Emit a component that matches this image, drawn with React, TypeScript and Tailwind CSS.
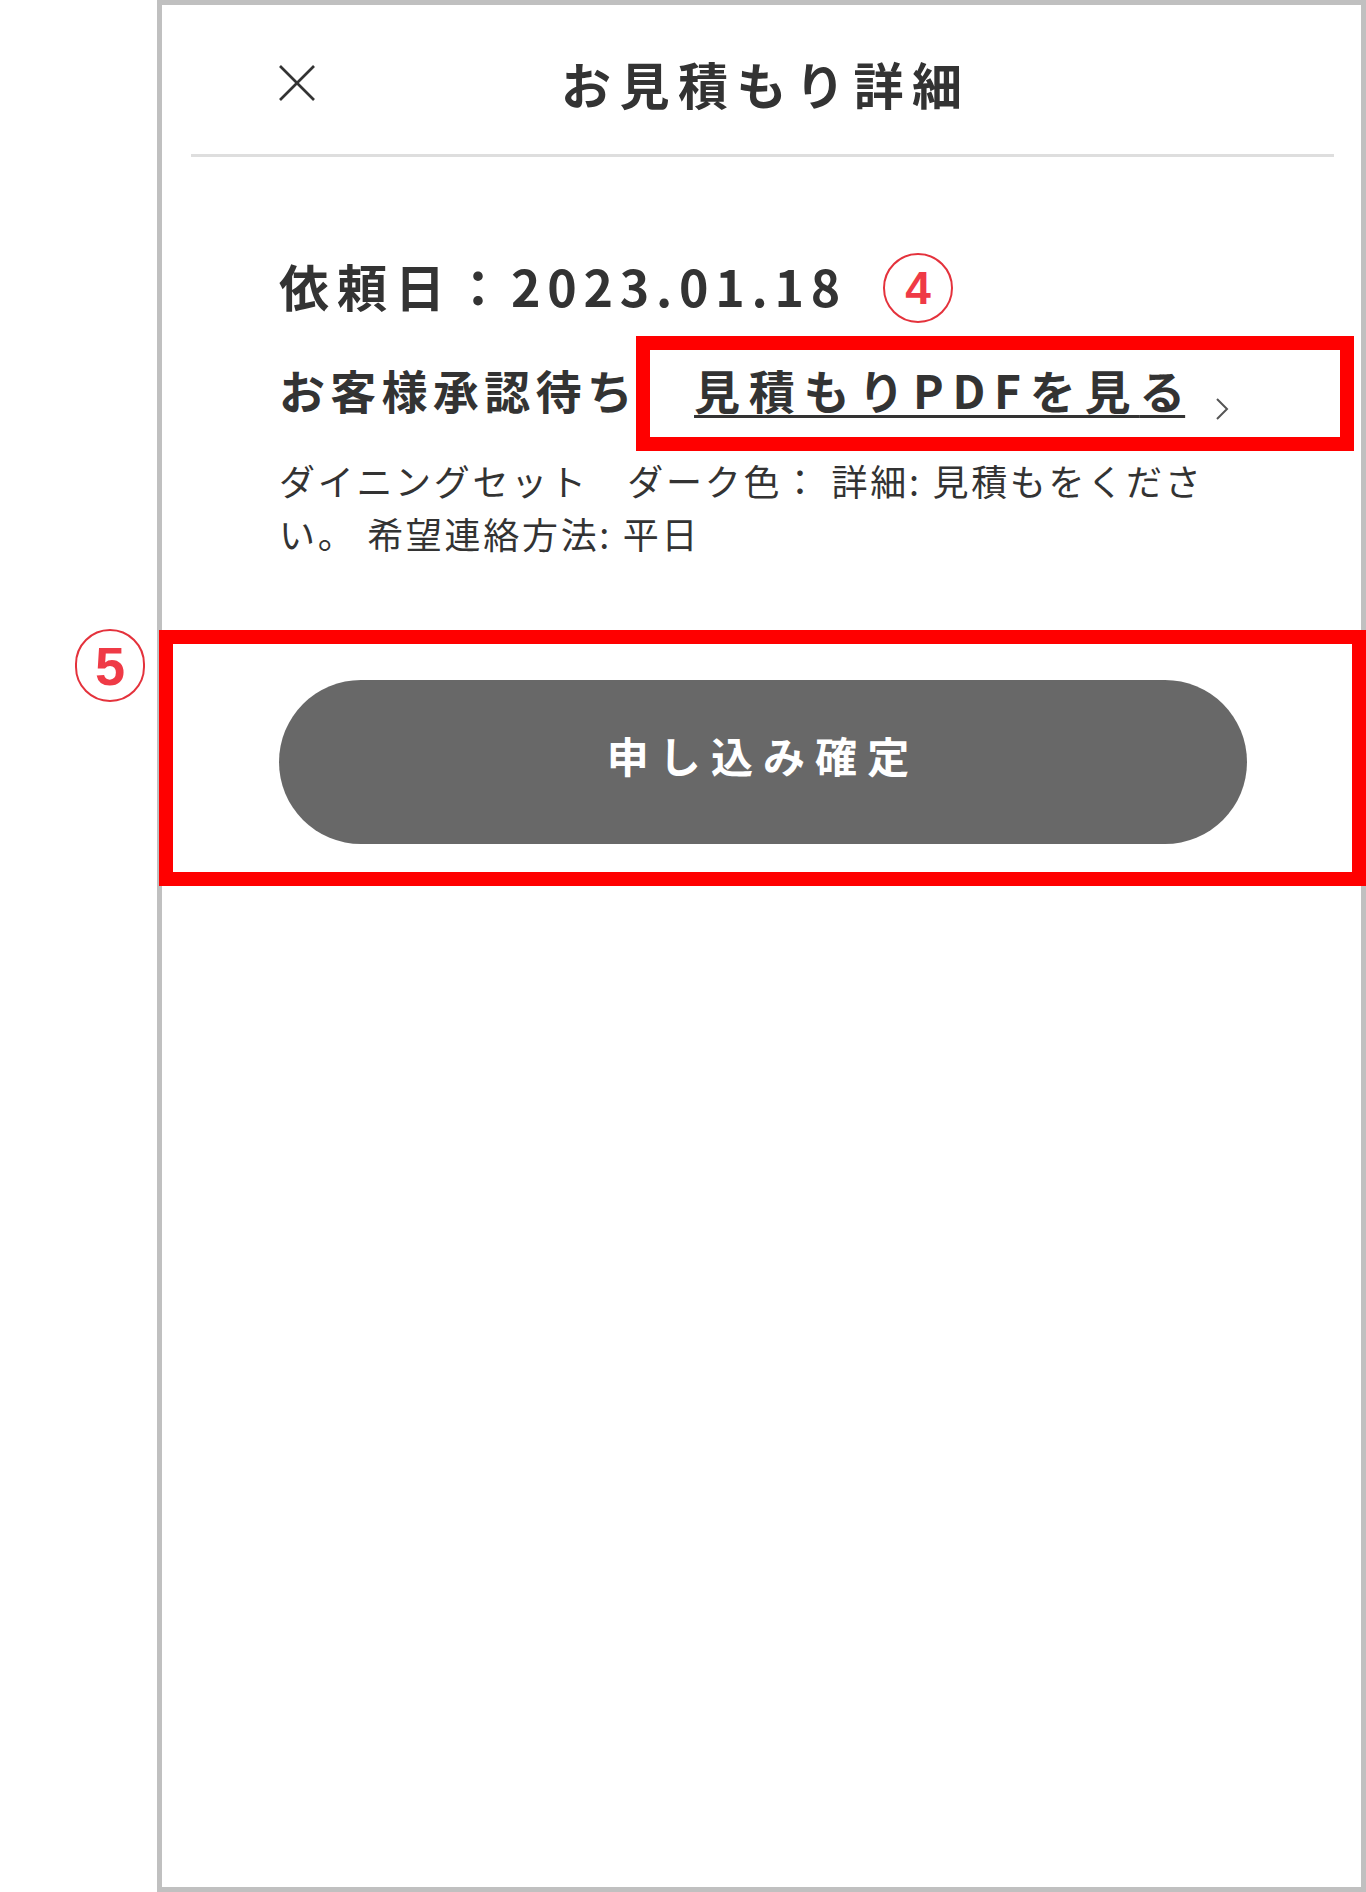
import React from "react";

const CloseIcon = () => (
  <svg width="38" height="38" viewBox="0 0 38 38" fill="none">
    <line x1="2" y1="2" x2="36" y2="36" stroke="#333" strokeWidth="2.6" />
    <line x1="36" y1="2" x2="2" y2="36" stroke="#333" strokeWidth="2.6" />
  </svg>
);

const Chevron = () => (
  <svg width="14" height="24" viewBox="0 0 14 24" fill="none">
    <polyline points="2,2 12,12 2,22" stroke="#555" strokeWidth="2" fill="none" />
  </svg>
);

export default function App() {
  return (
    <div className="relative w-[1366px] h-[1892px] bg-white flex font-['Noto_Sans_CJK_JP','Noto_Sans',sans-serif] text-[#333]">
      <div className="w-[157px] shrink-0" />
      <div className="flex-1 border-[5px] border-[#c0c0c0] bg-white">
        {/* header */}
        <div className="grid grid-cols-[1fr_auto_1fr] items-center h-[149px] pt-[6px]">
          <div className="pl-[116px] flex items-center">
            <CloseIcon />
          </div>
          <h1 className="text-[50px] leading-[60px] font-bold tracking-[0.17em] pl-[0.17em] text-[#333]">
            お見積もり詳細
          </h1>
          <div />
        </div>
        <div className="ml-[29px] mr-[27px] h-[3px] bg-[#dedede]" />

        {/* content */}
        <div className="pl-[117px] pr-[114px]">
          <div className="mt-[98px] text-[50px] leading-[60px] font-bold">
            <span className="tracking-[0.16em]">依頼日：</span>
            <span className="tracking-[0.135em]">2023.01.18</span>
          </div>
          <div className="mt-[44px] flex items-baseline">
            <span className="text-[46px] leading-[60px] font-bold tracking-[0.115em]">
              お客様承認待ち
            </span>
            <a className="ml-[56px] text-[46px] leading-[60px] font-bold tracking-[0.19em] underline decoration-[3px] underline-offset-[6px] text-[#333]">
              見積もりPDFを見<span className="tracking-normal">る</span>
            </a>
            <span className="ml-[30px] self-end mb-[-2px]">
              <Chevron />
            </span>
          </div>
          <p className="mt-[35px] w-[930px] text-[36px] leading-[53px] tracking-[0.075em] text-[#333]">
            ダイニングセット　ダーク色： 詳細: 見積もをください。 希望連絡方法: 平日
          </p>
          <button className="mt-[120px] h-[164px] w-full rounded-full bg-[#686868] text-white text-[42px] font-bold tracking-[0.24em] flex items-center justify-center pb-[16px]">
            申し込み確定
          </button>
        </div>
      </div>

      {/* annotation overlays */}
      <div className="absolute left-[636px] top-[336px] w-[718px] h-[115px] border-[14px] border-[#ff0000]" />
      <div className="absolute left-[159px] top-[630px] w-[1207px] h-[256px] border-[14px] border-[#ff0000]" />
      <div className="absolute left-[883px] top-[253px] w-[70px] h-[70px] rounded-full border-[2px] border-[#e4323c] flex items-center justify-center">
        <span className="text-[46px] leading-none font-bold text-[#ef3a46] font-['Liberation_Sans',sans-serif]">4</span>
      </div>
      <div className="absolute left-[75px] top-[629px] w-[70px] h-[73px] rounded-full border-[2px] border-[#e4323c] flex items-center justify-center">
        <span className="text-[54px] leading-none font-bold text-[#ef3a46] font-['Liberation_Sans',sans-serif]">5</span>
      </div>
    </div>
  );
}
